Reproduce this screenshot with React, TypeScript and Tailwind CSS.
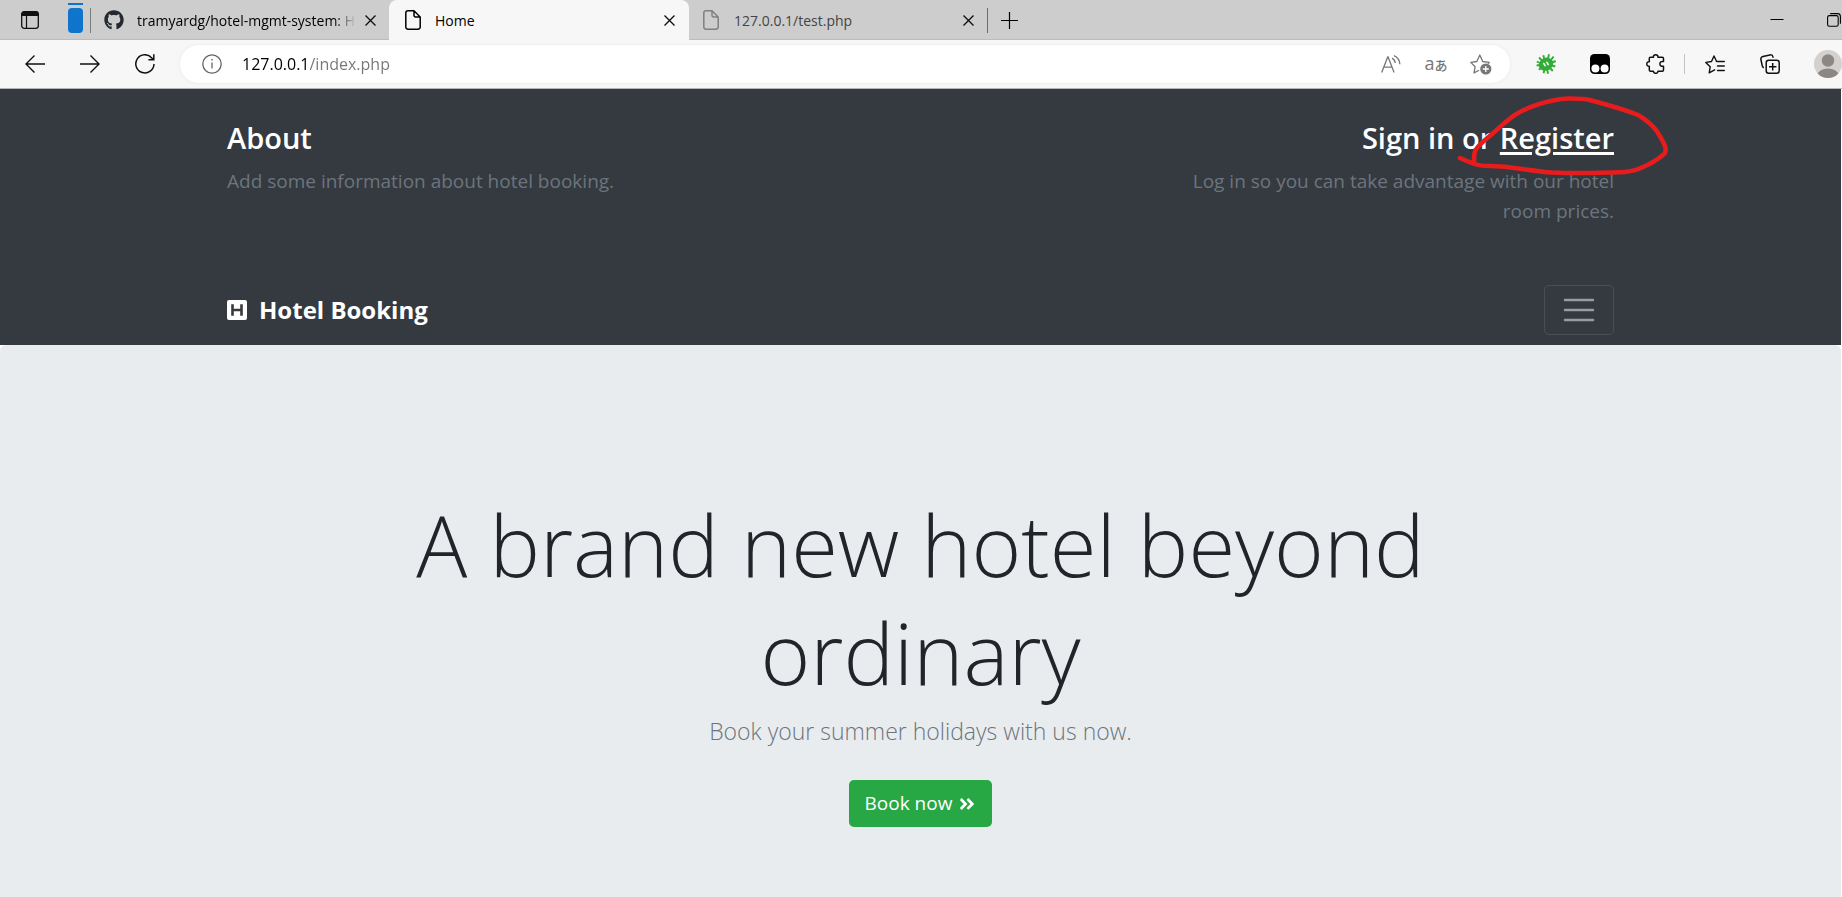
import React, { useState } from "react";
import { FaGithub, FaAngleDoubleRight } from "react-icons/fa";

function PageIcon() {
  return (
    <svg width="16" height="20" viewBox="0 0 16 20" fill="none" stroke="currentColor" strokeWidth="1.5" aria-hidden="true">
      <path d="M9 .8H3A2.2 2.2 0 0 0 .8 3v14A2.2 2.2 0 0 0 3 19.2h10a2.2 2.2 0 0 0 2.2-2.2V7zM9 .8V5.500A1.500 1.500 0 0 0 10.500 7h4.700" strokeLinejoin="round" />
    </svg>
  );
}

function CloseButton({ label }: { label: string }) {
  return (
    <button type="button" aria-label={label} className="flex size-5 shrink-0 items-center justify-center text-[#111]">
      <svg width="11" height="11" viewBox="0 0 11 11" fill="none" stroke="currentColor" strokeWidth="1.4" aria-hidden="true">
        <path d="M.5 .5l10 10M10.500 .5l-10 10" />
      </svg>
    </button>
  );
}

function IconButton({ label, className, children }: { label: string; className?: string; children: React.ReactNode }) {
  return (
    <button type="button" aria-label={label} className={"flex size-6 shrink-0 items-center justify-center " + (className ?? "")}>
      {children}
    </button>
  );
}

function TabStrip() {
  return (
    <div className="flex h-10 items-stretch bg-[#cdcdcd] shadow-[inset_0_-1px_0_#bcbcbc]">
      <div className="flex w-[90px] shrink-0 items-center pl-[21px]">
        <button type="button" aria-label="Tab actions">
          <svg width="18" height="18" viewBox="0 0 18 18" fill="none" stroke="#111" aria-hidden="true">
            <rect x=".7" y=".7" width="16.600" height="16.600" rx="2.500" strokeWidth="1.300" />
            <path d="M.7 4.500V3A2.500 2.500 0 0 1 3.200 .7h11.600A2.500 2.500 0 0 1 17.300 3v1.500z" fill="#111" />
            <path d="M5.500 4v13" strokeWidth="1.200" />
          </svg>
        </button>
        <div className="ml-[29px] flex flex-col gap-[3px] self-start pt-[3px]">
          <div className="h-[2px] w-[15px] bg-[#0f74cc]" />
          <div className="h-[25px] w-[15px] rounded-[4px] bg-[#0f74cc]" />
        </div>
      </div>
      <div className="flex w-[299px] shrink-0 items-center rounded-br-md pr-[9px]">
        <div className="h-[25px] w-px bg-[#7b7b7b]" />
        <FaGithub size={20} color="#24292f" className="ml-[13px] shrink-0" />
        <span className="mr-1 ml-[13px] flex-1 whitespace-nowrap text-[14px] [mask-image:linear-gradient(to_right,black_90%,transparent)]">
          tramyardg/hotel-mgmt-system: H
        </span>
        <CloseButton label="Close tab" />
      </div>
      <div className="flex w-[300px] shrink-0 items-center rounded-t-lg bg-[#f7f7f7] pr-[10px] pl-4 text-black">
        <PageIcon />
        <span className="ml-[14px] flex-1 text-[14px]">Home</span>
        <CloseButton label="Close tab" />
      </div>
      <div className="flex w-[298px] shrink-0 items-center pr-[9px] pl-[14px] text-[#808080]">
        <PageIcon />
        <span className="ml-[15px] flex-1 text-[14px] text-[#444]">127.0.0.1/test.php</span>
        <CloseButton label="Close tab" />
      </div>
      <div className="flex shrink-0 items-center">
        <div className="h-[25px] w-px bg-[#6b6b6b]" />
        <button type="button" aria-label="New tab" className="ml-[13px]">
          <svg width="17" height="17" viewBox="0 0 17 17" stroke="#000" strokeWidth="1.200" aria-hidden="true">
            <path d="M8.500 0v17M0 8.500h17" />
          </svg>
        </button>
      </div>
      <div className="ml-auto flex shrink-0 items-center gap-[43px] pr-px">
        <button type="button" aria-label="Minimize">
          <svg width="14" height="14" viewBox="0 0 14 14" stroke="#000" aria-hidden="true">
            <path d="M.5 6.500h13" />
          </svg>
        </button>
        <button type="button" aria-label="Restore">
          <svg width="14" height="14" viewBox="0 0 14 14" fill="none" stroke="#000" strokeWidth="1.100" aria-hidden="true">
            <rect x=".6" y="2.600" width="10.600" height="10.600" rx="1.800" />
            <path d="M3.200 .6h7.300a2.900 2.900 0 0 1 2.900 2.900v7.300" />
          </svg>
        </button>
      </div>
    </div>
  );
}

function Toolbar() {
  const [address, setAddress] = useState("127.0.0.1/index.php");
  return (
    <div className="flex h-[49px] items-center border-b border-[#b5b5b5] bg-[#f7f7f7] text-[#111]">
      <div className="flex w-[180px] shrink-0 items-center gap-[31px] pl-[23px]">
        <IconButton label="Back">
          <svg width="20" height="18" viewBox="0 0 20 18" fill="none" stroke="currentColor" strokeWidth="1.400" aria-hidden="true">
            <path d="M9.500 .5L1 9l8.500 8.500M1 9h19" />
          </svg>
        </IconButton>
        <IconButton label="Forward">
          <svg width="20" height="18" viewBox="0 0 20 18" fill="none" stroke="currentColor" strokeWidth="1.400" aria-hidden="true">
            <path d="M10.500 .5L19 9l-8.500 8.500M19 9H0" />
          </svg>
        </IconButton>
        <IconButton label="Refresh">
          <svg width="20" height="20" viewBox="0 0 20 20" fill="none" stroke="currentColor" strokeWidth="1.500" aria-hidden="true">
            <path d="M19 10a9.100 9.100 0 1 1-2.200-6.100L18.200 5.500M18.800 .3v5.400h-5.400" />
          </svg>
        </IconButton>
      </div>
      <div className="flex h-[38px] min-w-0 flex-1 items-center rounded-full bg-white pr-[17px] pl-[22px] text-[#777] shadow-[0_0_4px_rgba(0,0,0,0.06)]">
        <svg width="20" height="20" viewBox="0 0 20 20" fill="none" stroke="#666" strokeWidth="1.300" className="shrink-0" aria-hidden="true">
          <circle cx="10" cy="10" r="9.200" />
          <path d="M10 8.500v6" />
          <circle cx="10" cy="5.800" r=".5" fill="#666" strokeWidth=".8" />
        </svg>
        <input
          type="text"
          aria-label="Address"
          value={address}
          onChange={(e) => setAddress(e.target.value)}
          className="ml-5 min-w-0 flex-1 bg-linear-to-r from-black from-[67px] to-[#767676] to-[67px] bg-clip-text text-[16px] text-transparent outline-none"
        />
        <div className="flex items-center gap-[21px]">
          <IconButton label="Read aloud">
            <svg width="20" height="18" viewBox="0 0 20 18" fill="none" stroke="currentColor" strokeWidth="1.300" aria-hidden="true">
              <path d="M.7 17.500L6.700 2h.4l6 15.500M2.700 12.200h8.400M11 3.200c1.900.9 3 2.500 3.200 4.800M13 .6c3.600 1.600 5.500 4.500 5.900 8.600" />
            </svg>
          </IconButton>
          <IconButton label="Translate">
            <span className="flex items-baseline whitespace-nowrap leading-5">
              <span className="text-[18px]">a</span>
              <span className="text-[13px] font-medium">あ</span>
            </span>
          </IconButton>
          <IconButton label="Add to favorites">
            <svg width="22" height="21" viewBox="0 0 22 21" fill="none" stroke="currentColor" strokeWidth="1.300" strokeLinejoin="round" aria-hidden="true">
              <path d="M9 16.200l-5 2.700 1.100-6.100L.8 8.400l6-.9L9.800 1l2.900 6.500 6.600.9-1.400 1.500" />
              <circle cx="15.800" cy="15" r="5.600" fill="currentColor" stroke="none" />
              <path d="M15.800 12v6M12.800 15h6" stroke="#fff" />
            </svg>
          </IconButton>
        </div>
      </div>
      <div className="flex shrink-0 items-center pl-6">
        <IconButton label="Bug extension">
          <svg width="20" height="20" viewBox="0 0 20 20" fill="none" stroke="#31ad37" aria-hidden="true">
            <path d="M.8 7.500L4 9M3 3.500l3 3M7.300 1.200l1 4M13 .3l-1 4.500M17.600 2.500L15 6M19.700 7L16 8.500M19.300 12.500L16 11.500M16.800 17L14 14M12 19.700L11.300 16M7.600 19.200L8.500 15M2.800 15.700L6 13M.6 11.500L4 11" strokeWidth="1.900" />
            <ellipse cx="10" cy="10.200" rx="7.400" ry="6.300" transform="rotate(-30 10 10.200)" fill="#31ad37" stroke="none" />
            <path d="M7.800 9.500l1.300 2.200M10.900 8.300l1.300 2.200" stroke="#f7f7f7" strokeWidth="1.600" strokeLinecap="round" />
          </svg>
        </IconButton>
        <IconButton label="Script extension" className="ml-[30px]">
          <svg width="20" height="20" viewBox="0 0 20 20" aria-hidden="true">
            <rect width="20" height="20" rx="4.500" fill="#000" />
            <circle cx="5.400" cy="14.600" r="4" fill="#fff" />
            <circle cx="14.600" cy="14.600" r="4" fill="#fff" />
          </svg>
        </IconButton>
        <IconButton label="Extensions" className="ml-8">
          <svg width="20" height="20" viewBox="0 0 20 20" fill="none" stroke="currentColor" strokeWidth="1.500" strokeLinejoin="round" aria-hidden="true">
            <path d="M4.500 3.200h3c-.3-1.600.8-2.400 2.200-2.400s2.500.8 2.200 2.400h4.300c.8 0 1.300.5 1.300 1.200v3.100c-2.300-.3-3.600.6-3.600 2.400s1.300 2.700 3.600 2.400v3.700c0 .7-.5 1.200-1.300 1.200h-4.300c.1 1.400-.8 2.100-2.200 2.100s-2.300-.7-2.200-2.100h-3c-.7 0-1.200-.5-1.200-1.200v-3.700C1.700 12.400.8 11.500.8 10s.9-2.400 2.500-2.300V4.400c0-.7.5-1.200 1.200-1.200z" />
          </svg>
        </IconButton>
        <div className="ml-4 h-5 w-px bg-[#c4c4c4]" />
        <IconButton label="Favorites" className="ml-[18px]">
          <svg width="20" height="19" viewBox="0 0 20 19" fill="none" stroke="currentColor" strokeWidth="1.400" strokeLinejoin="round" strokeLinecap="round" aria-hidden="true">
            <path d="M9.600 14.800L4.200 17.800l1-6L.8 7.400l5.700-.9L9 1l2.600 5.500h7.700M12.500 11h6.800M12.500 15.500h6.800" />
          </svg>
        </IconButton>
        <IconButton label="Collections" className="ml-[31px]">
          <svg width="20" height="20" viewBox="0 0 20 20" fill="none" stroke="currentColor" strokeWidth="1.500" aria-hidden="true">
            <rect x="6.200" y="6.200" width="13" height="13" rx="2.500" />
            <path d="M12.700 9v7.400M9 12.700h7.400M3.800 13.800A3 3 0 0 1 2.300 12L.9 5.500A2.600 2.600 0 0 1 2.900 2.400L10 .9a2.600 2.600 0 0 1 3 2l.3.900" />
          </svg>
        </IconButton>
        <button type="button" aria-label="Profile" className="ml-8">
          <svg width="28" height="28" viewBox="0 0 28 28" aria-hidden="true">
            <clipPath id="avatar"><circle cx="14" cy="14" r="14" /></clipPath>
            <g clipPath="url(#avatar)">
              <rect width="28" height="28" fill="#d3d0ce" />
              <circle cx="14" cy="10.500" r="6.200" fill="#8a8785" />
              <ellipse cx="14" cy="25" rx="10.500" ry="6.500" fill="#8a8785" />
            </g>
          </svg>
        </button>
      </div>
    </div>
  );
}

function SiteHeader() {
  return (
    <header className="bg-[#343a40] text-white">
      <div className="mx-auto max-w-[1425px] px-[19px]">
        <div className="flex justify-between pt-[31px] pb-[49px]">
          <section>
            <h4 className="text-[29px] leading-9 font-semibold">About</h4>
            <p className="mt-[10px] text-[19px] leading-[30px] text-[#6c757d]">Add some information about hotel booking.</p>
          </section>
          <section className="relative w-[438px] text-right">
            <h4 className="text-[29px] leading-9 font-semibold">
              <a href="#signin">Sign in</a> or{" "}
              <a href="#register" className="underline decoration-[3px] underline-offset-[3px]">Register</a>
            </h4>
            <p className="mt-[10px] text-[19px] leading-[30px] text-[#6c757d]">
              Log in so you can take advantage with our hotel room prices.
            </p>
            <svg
              width="540"
              height="160"
              viewBox="0 0 540 160"
              fill="none"
              stroke="#e81c1c"
              strokeWidth="4.500"
              strokeLinecap="round"
              strokeLinejoin="round"
              className="pointer-events-none absolute -top-[35px] -right-[86px] max-w-none"
              aria-hidden="true"
            >
              <path d="M300 73C304 75 309 77 315 79C320 81 324 81 330 81C350 81 371 86 392 87.500C414 88.500 440 88 465 87C472 86 477 85 482 82.500C490 79 497 75 503 70C506 68 506 66 505.500 63C504 57 500 51 496 45C491 39 485 34 478 30C464 24 447 20 430 15C423 13.500 417 13.500 410 13.500C404 13.500 399 14 393 15.500C381 18 369 22 358 28C349 33 340 42 331 50C326 54 321 58 317 63C314 66 314 70 314 77" />
            </svg>
          </section>
        </div>
        <nav className="flex items-center justify-between py-[10px]">
          <a href="#home" className="flex items-center gap-3 text-[24px] leading-9 font-bold">
            <svg width="20" height="20" viewBox="0 0 20 20" aria-hidden="true">
              <rect width="20" height="20" rx="2" fill="#fff" />
              <path d="M5.500 4.200v11.600M14.500 4.200v11.600M5.500 10h9" stroke="#343a40" strokeWidth="2.600" />
            </svg>
            Hotel Booking
          </a>
          <button
            type="button"
            aria-label="Toggle navigation"
            className="flex h-[50px] w-[70px] items-center justify-center rounded-[5px] border border-white/10"
          >
            <svg width="32" height="24" viewBox="0 0 32 24" stroke="rgba(255,255,255,.5)" strokeWidth="2.500" strokeLinecap="round" aria-hidden="true">
              <path d="M2 2h28M2 12h28M2 22h28" />
            </svg>
          </button>
        </nav>
      </div>
    </header>
  );
}

function Hero() {
  return (
    <main className="flex-1 rounded-t-md bg-[#e9ecef] px-5 pt-[145px] pb-[68px] text-center">
      <div className="mx-auto max-w-[1050px]">
        <h1 className="text-[85px] leading-[108px] font-light text-[#212529]">A brand new hotel beyond ordinary</h1>
        <p className="mt-[6px] text-[23px] leading-[38px] font-light text-[#6c757d]">Book your summer holidays with us now.</p>
        <button
          type="button"
          className="mt-[30px] inline-flex h-[47px] items-center gap-[6px] rounded-[5px] bg-[#28a745] px-4 text-[19px] text-white"
        >
          Book now
          <FaAngleDoubleRight size={18} aria-hidden="true" />
        </button>
      </div>
    </main>
  );
}

export default function App() {
  return (
    <div className="flex min-h-screen flex-col overflow-hidden bg-white font-['Open_Sans','Noto_Sans_CJK_JP',sans-serif]">
      <TabStrip />
      <Toolbar />
      <div className="flex flex-1 flex-col pr-px">
        <SiteHeader />
        <Hero />
      </div>
    </div>
  );
}
